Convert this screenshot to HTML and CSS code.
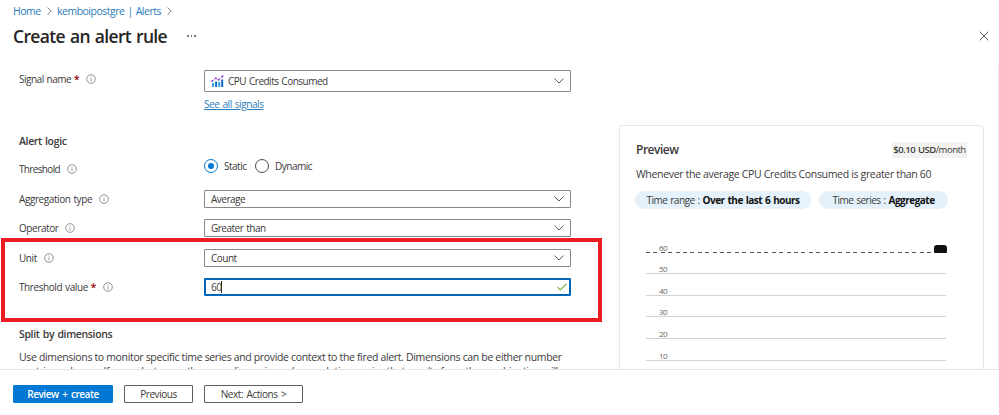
FILE: index.html
```html
<!DOCTYPE html>
<html lang="en">
<head>
  <meta charset="UTF-8">
  <meta name="viewport" content="width=device-width, initial-scale=1.0">
  <title>Create an alert rule</title>
  <link rel="stylesheet" href="styles.css">
</head>
<body>
  <!-- shared icons -->
  <svg class="defs" width="0" height="0">
    <symbol id="info" viewBox="0 0 10 10">
      <circle cx="5" cy="5" r="4.3" fill="none" stroke="#777" stroke-width="0.8"/>
      <path d="M5 4.4v3M5 2.6v0.9" stroke="#777" stroke-width="0.8"/>
    </symbol>
    <symbol id="chevron" viewBox="0 0 10 6">
      <path d="M0.5 0.6L5 5L9.5 0.6" fill="none" stroke="#555" stroke-width="1"/>
    </symbol>
    <symbol id="crumb" viewBox="0 0 5 8">
      <path d="M0.6 0.6L4.2 4L0.6 7.4" fill="none" stroke="#777" stroke-width="0.9"/>
    </symbol>
  </svg>

  <header class="header">
    <nav class="breadcrumb">
      <a class="crumb-home">Home</a>
      <svg class="crumb"><use href="#crumb"/></svg>
      <a class="crumb-alerts">kemboipostgre | Alerts</a>
      <svg class="crumb"><use href="#crumb"/></svg>
    </nav>
    <div class="title-row">
      <h1>Create an alert rule</h1>
      <span class="more"><i></i><i></i><i></i></span>
      <svg class="close" viewBox="0 0 10 10"><path d="M0.7 0.7L9.3 9.3M9.3 0.7L0.7 9.3" stroke="#555" stroke-width="1"/></svg>
    </div>
  </header>

  <main class="content">
    <section class="form">
      <div class="row signal-row">
        <label>Signal name <b class="req">*</b></label><svg class="info"><use href="#info"/></svg>
        <div class="field select signal">
          <svg class="metric" viewBox="0 0 13 12">
            <path d="M1 8h2v4H1zM7.2 7h2v5h-2z" fill="#32a5e8"/>
            <path d="M4.1 6.5h2V12h-2zM10.2 4.5h2V12h-2z" fill="#1267c4"/>
            <path d="M1.2 6L4.8 3.3L7.7 4.8L11.4 1.3" fill="none" stroke="#a66ce0" stroke-width="0.8"/>
            <g fill="#8a3fd8"><circle cx="1.3" cy="6" r="1"/><circle cx="4.8" cy="3.3" r="1"/><circle cx="7.8" cy="4.8" r="1"/><circle cx="11.4" cy="1.4" r="1.1"/></g>
          </svg>
          <span class="signal-text">CPU Credits Consumed</span>
          <svg class="chevron"><use href="#chevron"/></svg>
        </div>
      </div>
      <a class="link">See all signals</a>

      <h2 class="logic-title">Alert logic</h2>
      <div class="row threshold-row">
        <label>Threshold</label><svg class="info"><use href="#info"/></svg>
        <div class="radios">
          <span class="radio checked"></span><span class="static">Static</span>
          <span class="radio"></span><span>Dynamic</span>
        </div>
      </div>
      <div class="row">
        <label>Aggregation type</label><svg class="info"><use href="#info"/></svg>
        <div class="field select"><span>Average</span><svg class="chevron"><use href="#chevron"/></svg></div>
      </div>
      <div class="row">
        <label>Operator</label><svg class="info"><use href="#info"/></svg>
        <div class="field select"><span>Greater than</span><svg class="chevron"><use href="#chevron"/></svg></div>
      </div>
      <div class="marked">
        <div class="row">
          <label>Unit</label><svg class="info"><use href="#info"/></svg>
          <div class="field select"><span>Count</span><svg class="chevron"><use href="#chevron"/></svg></div>
        </div>
        <div class="row">
          <label>Threshold value <b class="req">*</b></label><svg class="info"><use href="#info"/></svg>
          <div class="field input">
            <span class="value">60</span>
            <svg class="check" viewBox="0 0 10 8"><path d="M0.6 4.2L3.3 7L9.4 0.8" fill="none" stroke="#7cb342" stroke-width="1.2"/></svg>
          </div>
        </div>
      </div>

      <h2 class="split-title">Split by dimensions</h2>
      <p class="desc">Use dimensions to monitor specific time series and provide context to the fired alert. Dimensions can be either number<br>
        or string columns. If you select more than one dimension value, each time series that results from the combination will</p>
    </section>

    <aside class="preview">
      <div class="preview-head">
        <h3>Preview</h3>
        <span class="price"><b>$0.10 USD</b>/month</span>
      </div>
      <p class="condition">Whenever the average CPU Credits Consumed is greater than 60</p>
      <div class="pills">
        <span class="pill range">Time range : <b>Over the last 6 hours</b></span>
        <span class="pill series">Time series : <b>Aggregate</b></span>
      </div>
      <div class="chart">
        <div class="tick limit"><span>60</span><i class="tag"></i></div>
        <div class="tick"><span>50</span></div>
        <div class="tick"><span>40</span></div>
        <div class="tick"><span>30</span></div>
        <div class="tick"><span>20</span></div>
        <div class="tick"><span>10</span></div>
      </div>
    </aside>
  </main>

  <footer class="footer">
    <button class="primary">Review + create</button>
    <button class="previous">Previous</button>
    <button class="next">Next: Actions &gt;</button>
  </footer>
</body>
</html>
```

FILE: styles.css
```css
* { box-sizing: border-box; margin: 0; padding: 0; }

body {
  display: flex;
  flex-direction: column;
  height: 415px;
  overflow: hidden;
  background: #fff;
  color: #3b3a39;
  font: 10px/14px "Open Sans", "Noto Sans", sans-serif;
  letter-spacing: -0.5px;
  word-spacing: 0.8px;
}

svg { display: block; flex: none; }
.defs { position: absolute; }

/* header */
.header { flex: none; height: 65px; padding: 4px 10px 0 13px; }

.breadcrumb {
  display: flex;
  align-items: center;
  height: 14px;
  color: #2b7cba;
  font-size: 10.5px;
  white-space: nowrap;
}
.crumb { width: 5px; height: 8px; }
.crumb-home { width: 34px; }
.crumb-alerts { width: 110px; }
.breadcrumb .crumb:nth-child(2) { margin-right: 5px; }

.title-row { display: flex; align-items: center; height: 24px; margin-top: 6px; }
h1 {
  width: 174px;
  white-space: nowrap;
  color: #252423;
  font-size: 17.5px;
  font-weight: 600;
  letter-spacing: -0.65px;
  word-spacing: 1px;
}
.more { display: flex; gap: 2px; }
.more i { width: 1.5px; height: 1.5px; background: #777; }
.close { width: 10px; height: 10px; margin-left: auto; }

/* form */
.content {
  display: flex;
  flex: none;
  height: 305px;
  overflow: hidden;
  border-right: 1px solid #e8e8e8;
}
.form { width: 619px; flex: none; padding: 5px 0 0 19px; }

.row {
  display: flex;
  align-items: center;
  width: 552px;
  height: 18px;
  margin-bottom: 11px;
}
.row label { white-space: nowrap; letter-spacing: -0.42px; }
.req { color: #a4262c; }
.info { width: 10px; height: 10px; margin-left: 7px; }

.field {
  display: flex;
  align-items: center;
  width: 367px;
  height: 18px;
  margin-left: auto;
  padding: 0 6px;
  border: 1px solid #8a8886;
  border-radius: 1px;
}
.chevron { width: 10px; height: 6px; margin-left: auto; }

.signal-row { height: 22px; margin-bottom: 5px; }
.signal-row label, .signal-row .info { margin-bottom: 4px; }
.row.signal-row label { letter-spacing: -0.5px; }
.signal { height: 22px; }
.metric { width: 13px; height: 12px; margin-right: 4px; }
.link {
  display: block;
  margin-left: 185px;
  color: #2b7cba;
  text-decoration: underline;
  letter-spacing: -0.42px;
}

h2 { font-size: 10.5px; line-height: 14px; font-weight: 600; letter-spacing: -0.35px; }
.logic-title { margin-top: 23px; }

.threshold-row { margin: 12px 0 12px; }
.row.threshold-row label { letter-spacing: -0.65px; }
.radios { display: flex; align-items: center; width: 367px; margin: 0 0 6px auto; }
.radio {
  width: 14px;
  height: 14px;
  margin-right: 6px;
  border: 1px solid #4b4a49;
  border-radius: 50%;
}
.radio.checked {
  padding: 3px;
  border-color: #0078d4;
  background: #0078d4 content-box;
}
.static { width: 31px; }

/* highlighted block, spread out past the form padding */
.marked {
  width: 601px;
  height: 84px;
  margin: -10px 0 0 -18px;
  padding: 7px 0 0 14px;
  border: 4px solid #ed1c24;
}
.input { border: 2px solid #0067b8; padding: 0 5px; }
.value { border-right: 1px solid #222; line-height: 12px; }
.check { width: 10px; height: 8px; margin: 0 -3px 0 auto; }

.split-title { margin-top: 5px; }
.desc { margin-top: 9px; white-space: nowrap; font-size: 10.5px; letter-spacing: -0.34px; word-spacing: 0; }

/* preview card */
.preview {
  width: 365px;
  height: 300px;
  flex: none;
  margin-top: 60px;
  padding: 15px 16px 0;
  border: 1px solid #e8e8e8;
  border-radius: 3px;
}
.preview-head { display: flex; align-items: center; justify-content: space-between; height: 17px; }
h3 { font-size: 12px; font-weight: 600; }
.price {
  width: 75px;
  height: 16px;
  line-height: 16px;
  text-align: center;
  white-space: nowrap;
  background: #f3f2f1;
  font-size: 9.5px;
}
.price b { font-weight: 600; }
.condition { margin-top: 9px; white-space: nowrap; font-size: 10.5px; letter-spacing: -0.33px; word-spacing: 0; }

.pills { display: flex; gap: 8px; margin-top: 10px; margin-left: -1px; }
.pill {
  height: 18px;
  border-radius: 9px;
  background: #e5f1fb;
  line-height: 18px;
  text-align: center;
  white-space: nowrap;
}
.pill b { color: #111; }
.range { width: 176px; }
.series { width: 129px; }

.chart { width: 300px; margin: 22px 0 0 10px; }
.tick {
  display: flex;
  align-items: flex-end;
  height: 21.6px;
  padding-left: 13px;
  border-bottom: 1px solid #d2d2d2;
  color: #666;
  font-size: 8px;
  line-height: 8px;
}
.limit {
  border: 0;
  padding-bottom: 1px;
  background: repeating-linear-gradient(90deg, #555 0 4px, transparent 4px 7.4px) bottom / 100% 1px no-repeat;
}
.tag {
  width: 13px;
  height: 8px;
  margin: 0 -1px -1px auto;
  border-radius: 3px 3px 1px 1px;
  background: #111;
}

/* footer */
.footer {
  display: flex;
  flex: 1;
  gap: 11px;
  margin-top: -1px;
  padding: 15px 13px;
  border-top: 1px solid #e3e3e3;
  background: #fff;
}
.footer button {
  height: 18px;
  border: 1px solid #605e5c;
  border-radius: 1px;
  background: #fff;
  color: #3b3a39;
  font: inherit;
  line-height: 14px;
  letter-spacing: -0.45px;
  word-spacing: 1.3px;
}
.footer .primary {
  width: 100px;
  border-color: #0078d4;
  background: #0078d4;
  color: #fff;
  font-weight: 600;
}
.previous { width: 69px; }
.next { width: 99px; }
```
